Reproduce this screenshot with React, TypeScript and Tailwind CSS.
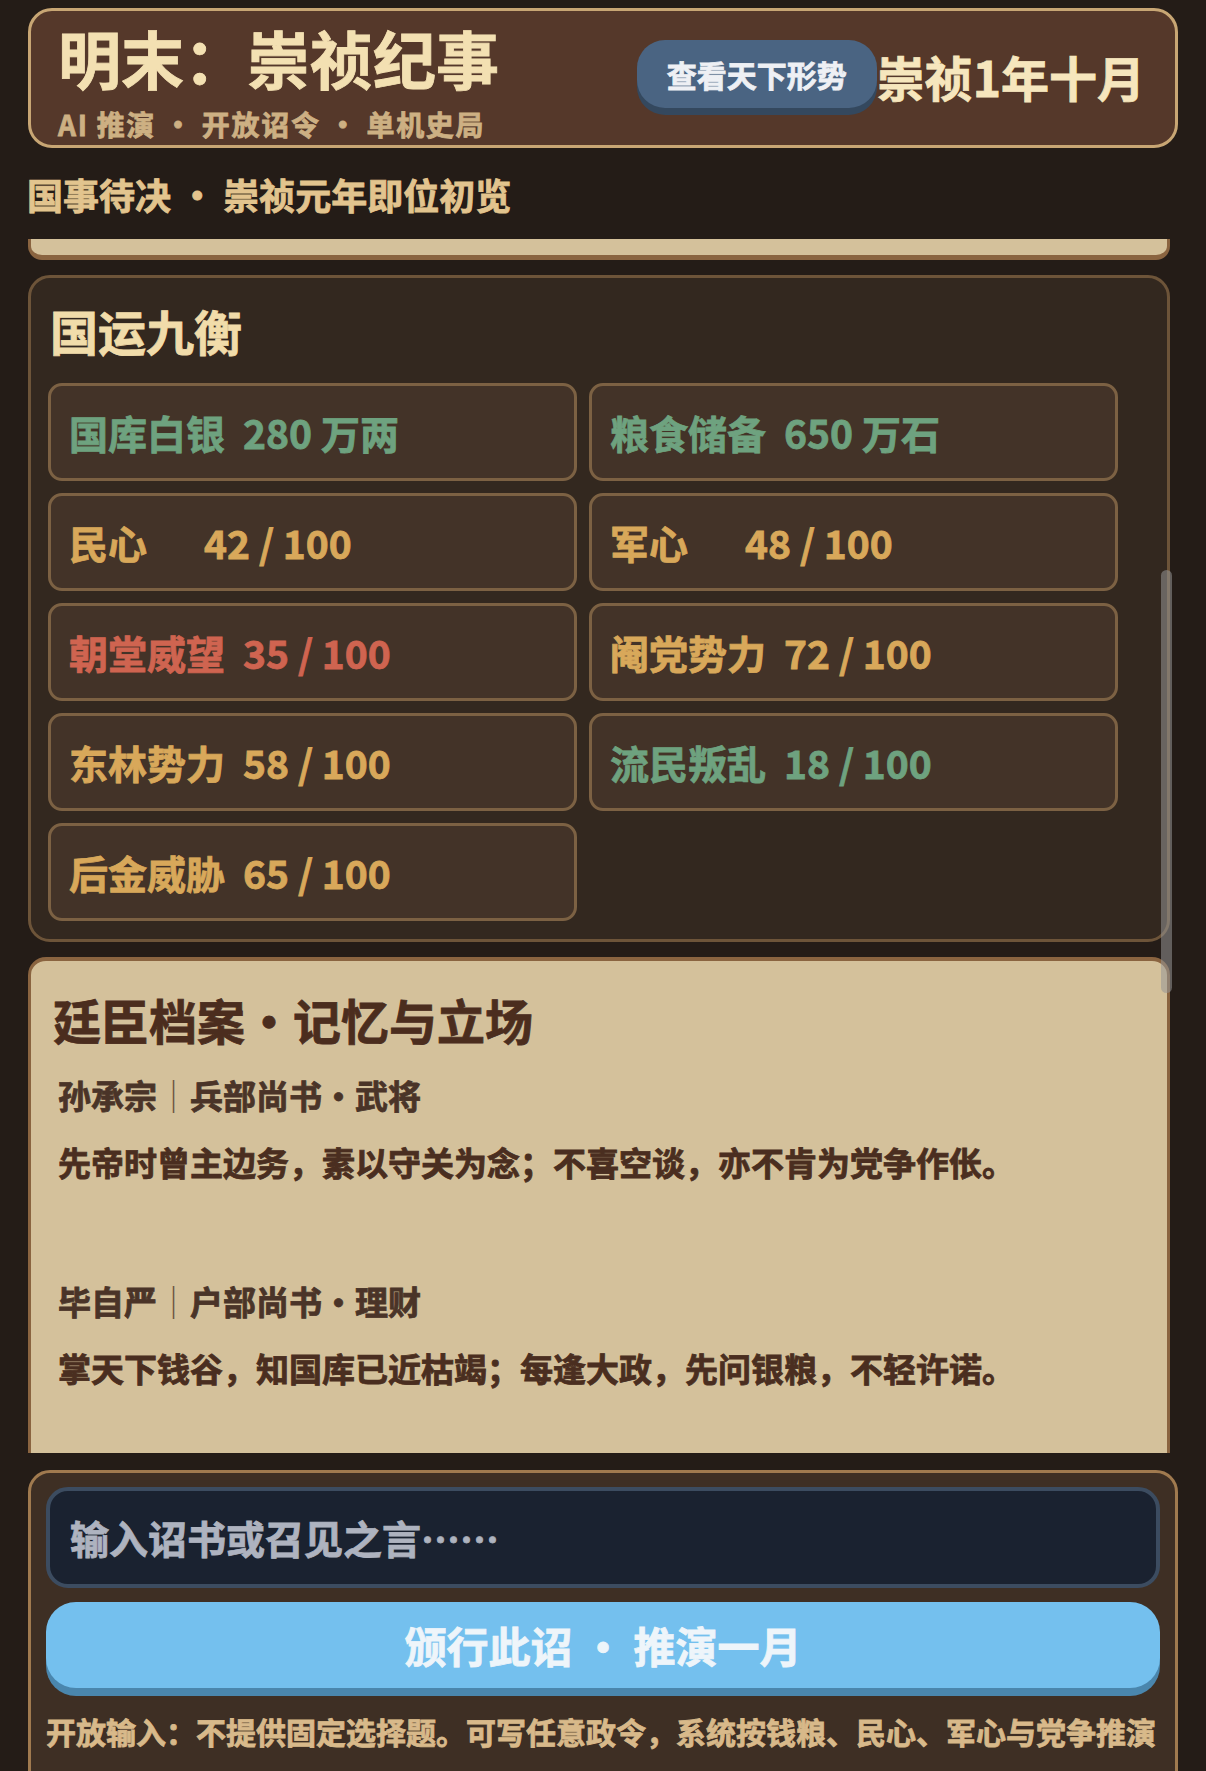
import React from 'react';

type Tone = 'green' | 'gold' | 'red';

const TONE_COLORS: Record<Tone, string> = {
  green: 'text-[#6ea27f]',
  gold: 'text-[#d8a85a]',
  red: 'text-[#cf6450]',
};

const STATS: { label: string; value: string; tone: Tone }[] = [
  { label: '国库白银', value: '280 万两', tone: 'green' },
  { label: '粮食储备', value: '650 万石', tone: 'green' },
  { label: '民心　', value: '42 / 100', tone: 'gold' },
  { label: '军心　', value: '48 / 100', tone: 'gold' },
  { label: '朝堂威望', value: '35 / 100', tone: 'red' },
  { label: '阉党势力', value: '72 / 100', tone: 'gold' },
  { label: '东林势力', value: '58 / 100', tone: 'gold' },
  { label: '流民叛乱', value: '18 / 100', tone: 'green' },
  { label: '后金威胁', value: '65 / 100', tone: 'gold' },
];

const MINISTERS = [
  {
    name: '孙承宗',
    role: '兵部尚书・武将',
    note: '先帝时曾主边务，素以守关为念；不喜空谈，亦不肯为党争作伥。',
  },
  {
    name: '毕自严',
    role: '户部尚书・理财',
    note: '掌天下钱谷，知国库已近枯竭；每逢大政，先问银粮，不轻许诺。',
  },
];

export default function App() {
  return (
    <div className="relative w-[1206px] h-[1771px] overflow-hidden bg-[#241c17] font-['Noto_Sans_CJK_SC','Noto_Sans',sans-serif] font-bold [-webkit-text-stroke:0.8px_currentColor]">
      {/* 顶部标题 */}
      <header className="mx-[28px] mt-[8px] h-[140px] rounded-[24px] border-[3px] border-[#c8a674] bg-[#55382a] flex justify-between">
        <div className="pl-[27px] pt-[14px]">
          <h1 className="text-[63px] leading-none text-[#f3e0b2]">明末：崇祯纪事</h1>
          <p className="mt-[22px] text-[28px] leading-none tracking-[1.7px] text-[#cdb083]">
            AI 推演 ・ 开放诏令 ・ 单机史局
          </p>
        </div>
        <div className="flex items-start pr-[30px]">
          <button className="mt-[29px] h-[68px] w-[240px] rounded-[28px] bg-[#4a6482] shadow-[0_7px_0_#34485e] text-[30px] leading-none text-[#eef0f4]">
            查看天下形势
          </button>
          <div className="mt-[41px] text-[48px] leading-none text-[#f6e6bd]">崇祯1年十月</div>
        </div>
      </header>

      <div className="mx-[27px] mt-[28px] text-[36px] leading-none text-[#e2c48e]">国事待决 ・ 崇祯元年即位初览</div>

      {/* 滚动区 */}
      <div className="ml-[28px] mr-[36px] mt-[27px] h-[1214px] overflow-hidden">
        <div className="h-[21px] rounded-b-[14px] border-x-[3px] border-b-[5px] border-[#8a6440] bg-[#d4c19b]" />

        <section className="mt-[15px] rounded-[22px] border-[3px] border-[#6d5439] bg-[#33281f] pl-[17px] pt-[28px] pb-[18px]">
          <h2 className="pl-[2px] text-[48px] leading-none text-[#f1dcaa]">国运九衡</h2>
          <div className="mt-[29px] grid grid-cols-[529px_529px] gap-[12px]">
            {STATS.map((s) => (
              <div
                key={s.label}
                className={`h-[98px] rounded-[14px] border-[3px] border-[#7c6143] bg-[#433328] flex items-center gap-[18px] pl-[18px] text-[39px] leading-none ${TONE_COLORS[s.tone]}`}
              >
                <span>{s.label}</span>
                <span>{s.value}</span>
              </div>
            ))}
          </div>
        </section>

        <section className="mt-[15px] rounded-t-[18px] border-[3px] border-t-[4px] border-[#8a6440] bg-[#d4c19b] pl-[22px] pt-[34px] pb-[300px]">
          <h2 className="text-[48px] leading-none text-[#4b2d1e]">廷臣档案・记忆与立场</h2>
          {MINISTERS.map((m, i) => (
            <div key={m.name} className={`pl-[5px] ${i === 0 ? 'mt-[36px]' : 'mt-[106px]'}`}>
              <div className="text-[33px] leading-none text-[#4a3428]">
                {m.name}
                <span className="font-normal text-[#6b5442] [-webkit-text-stroke:0px]">｜</span>
                {m.role}
              </div>
              <p className="mt-[34px] text-[33px] leading-none text-[#4a2e20]">{m.note}</p>
            </div>
          ))}
        </section>
      </div>

      {/* 诏书输入 */}
      <footer className="mx-[28px] mt-[17px] h-[400px] rounded-[22px] border-[3px] border-[#a07a4f] bg-[#3e2f24] px-[15px] pt-[14px]">
        <div className="h-[101px] rounded-[22px] border-[4px] border-[#3c4c60] bg-[#1a2230] flex items-center pl-[20px] text-[39px] leading-none text-[#aeb3bf]">
          输入诏书或召见之言……
        </div>
        <button className="mt-[14px] h-[86px] w-full rounded-[30px] bg-[#74c0ee] shadow-[0_8px_0_#4a86ad] text-[42px] leading-none text-[#eef5fa]">
          颁行此诏 ・ 推演一月
        </button>
        <p className="mt-[28px] whitespace-nowrap text-[30px] leading-none text-[#d8b98a]">
          开放输入：不提供固定选择题。可写任意政令，系统按钱粮、民心、军心与党争推演
        </p>
      </footer>

      {/* 滚动条 */}
      <div className="absolute left-[1161px] top-[570px] h-[423px] w-[11px] rounded-full bg-[#969696]/55" />
    </div>
  );
}
